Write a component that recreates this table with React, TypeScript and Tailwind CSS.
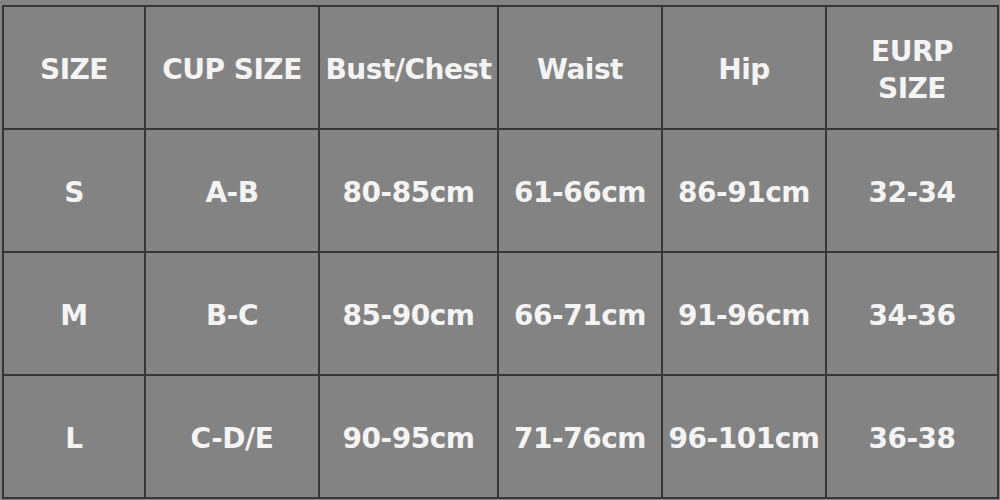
import React from 'react';

const headers = ['SIZE', 'CUP SIZE', 'Bust/Chest', 'Waist', 'Hip', 'EURP SIZE'];

const rows = [
  ['S', 'A-B', '80-85cm', '61-66cm', '86-91cm', '32-34'],
  ['M', 'B-C', '85-90cm', '66-71cm', '91-96cm', '34-36'],
  ['L', 'C-D/E', '90-95cm', '71-76cm', '96-101cm', '36-38'],
];

const App: React.FC = () => {
  return (
    <div className="w-[1000px] h-[500px] bg-[#848484] pt-[5px] pl-[2px] overflow-hidden">
      <div
        className="grid grid-cols-[140px_172px_177px_162px_162px_170px] grid-rows-[121px_121px_121px_121px] gap-[2px] p-[2px] bg-[#363636] w-max text-[#f4f4f4] font-bold text-[28px] tracking-[-0.5px]"
        style={{ fontFamily: '"DejaVu Sans", Verdana, sans-serif' }}
      >
        {headers.map((h) => (
          <div key={h} className="bg-[#838383] flex items-center justify-center text-center leading-[37px] pt-1">
            {h === 'EURP SIZE' ? (
              <span>EURP<br />SIZE</span>
            ) : (
              <span className="whitespace-nowrap">{h}</span>
            )}
          </div>
        ))}
        {rows.map((row) =>
          row.map((cell, i) => (
            <div key={row[0] + i} className="bg-[#838383] flex items-center justify-center whitespace-nowrap pt-1">
              {cell}
            </div>
          ))
        )}
      </div>
    </div>
  );
};

export default App;
